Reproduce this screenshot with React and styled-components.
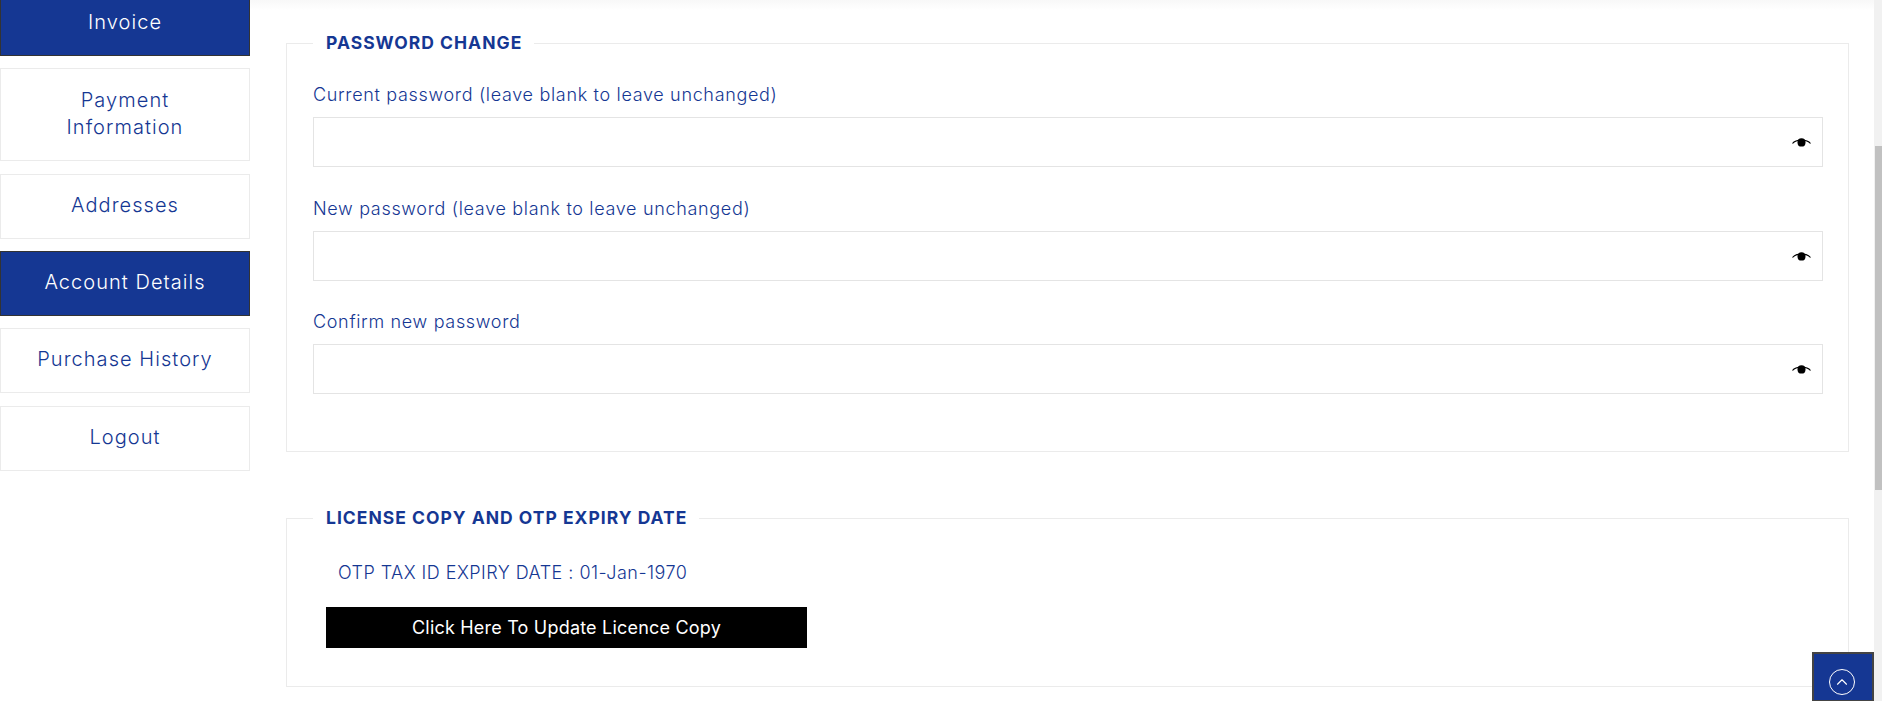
import React from 'react';
import styled, { createGlobalStyle } from 'styled-components';
import { ChevronUp } from 'lucide-react';

const NAVY = '#153793';
const LINE = '#ebebeb';
const FONT = '"Inter", "Open Sans", sans-serif';

const GlobalStyle = createGlobalStyle`
  html, body {
    margin: 0;
    height: 701px;
    overflow: hidden;
    background: #fff;
    font-family: ${FONT};
    color: ${NAVY};
  }
  * { box-sizing: border-box; }
`;

const Page = styled.div`
  display: flex;
  height: 701px;
  overflow: hidden;
`;

const Main = styled.div`
  flex: 1;
  display: flex;
  gap: 36px;
  min-width: 0;
`;

const Sidebar = styled.nav`
  width: 250px;
  flex: none;
  display: flex;
  flex-direction: column;
  gap: 12.35px;
  margin-top: -9px;
`;

const NavItem = styled.a`
  display: flex;
  align-items: center;
  justify-content: center;
  flex: none;
  height: ${(props) => props.$height || 65}px;
  padding: 0 30px 2px;
  text-align: center;
  font-size: 20px;
  font-weight: 300;
  letter-spacing: 1.05px;
  line-height: 27px;
  background: ${(props) => (props.$active ? NAVY : '#fff')};
  color: ${(props) => (props.$active ? '#fff' : NAVY)};
  border: 1px solid ${(props) => (props.$active ? '#333' : LINE)};
`;

const Content = styled.div`
  flex: 1;
  min-width: 0;
  padding: 33px 25px 0 0;
  position: relative;
`;

const TopShade = styled.div`
  position: absolute;
  top: 0;
  left: -36px;
  right: 0;
  height: 10px;
  background: linear-gradient(#f8f8f8, #fff);
`;

const Box = styled.fieldset`
  margin: 0 0 ${(props) => props.$gap || 0}px;
  padding: 0 25px 0 26px;
  height: ${(props) => props.$height}px;
  border: 1px solid ${LINE};
`;

const BoxTitle = styled.legend`
  padding: 0 12px 0 13px;
  font-size: 17.5px;
  font-weight: 700;
  letter-spacing: 1px;
  line-height: 20px;
  color: ${NAVY};
  text-transform: uppercase;
`;

const FieldList = styled.div`
  display: flex;
  flex-direction: column;
  gap: 29.6px;
  padding-top: 30px;
`;

const Label = styled.label`
  display: block;
  margin-bottom: 10px;
  font-size: 18px;
  font-weight: 300;
  letter-spacing: 0.67px;
  line-height: 24px;
`;

const InputWrap = styled.div`
  position: relative;
`;

const Input = styled.input`
  display: block;
  width: 100%;
  height: 50px;
  border: 1px solid #e4e4e4;
  background: #fff;
  outline: none;
`;

const EyeIcon = styled.svg`
  position: absolute;
  right: 12px;
  top: 21px;
  width: 19px;
  height: 10px;
`;

const ExpiryText = styled.p`
  margin: 33px 0 22px 25px;
  font-size: 18px;
  font-weight: 300;
  letter-spacing: 0.47px;
  line-height: 24px;
`;

const UpdateButton = styled.button`
  display: block;
  width: 481px;
  height: 41px;
  margin-left: 13px;
  border: 0;
  background: #000;
  color: #fff;
  font-family: inherit;
  font-size: 18px;
  font-weight: 400;
  letter-spacing: 0.2px;
`;

const ScrollRail = styled.div`
  width: 8px;
  flex: none;
  background: #f1f1f1;
  padding-top: 146px;
`;

const ScrollThumb = styled.div`
  height: 344px;
  margin-left: 1px;
  background: #c1c1c1;
`;

const TopButton = styled.a`
  position: fixed;
  right: 8px;
  bottom: -1px;
  width: 62px;
  height: 50px;
  display: flex;
  align-items: center;
  justify-content: center;
  background: ${NAVY};
  border: 2px solid #444;
`;

const TopCircle = styled.span`
  width: 26px;
  height: 26px;
  margin: 9px 3px 0 0;
  border: 1.5px solid #fff;
  border-radius: 50%;
  display: flex;
  align-items: center;
  justify-content: center;
  color: #fff;
`;

function Eye() {
  return (
    <EyeIcon viewBox="0 0 19 10">
      <path d="M0.5 5.5 C4 1 15 1 18.5 5.5" fill="none" stroke="#000" strokeWidth="1.2" />
      <ellipse cx="9.5" cy="4.4" rx="4" ry="4.2" fill="#000" />
    </EyeIcon>
  );
}

const fields = [
  'Current password (leave blank to leave unchanged)',
  'New password (leave blank to leave unchanged)',
  'Confirm new password',
];

export default function App() {
  return (
    <Page>
      <GlobalStyle />
      <Main>
        <Sidebar>
          <NavItem $active>Invoice</NavItem>
          <NavItem $height={93}>Payment Information</NavItem>
          <NavItem>Addresses</NavItem>
          <NavItem $active>Account Details</NavItem>
          <NavItem>Purchase History</NavItem>
          <NavItem>Logout</NavItem>
        </Sidebar>
        <Content>
          <TopShade />
          <Box $height={419} $gap={56}>
            <BoxTitle>Password Change</BoxTitle>
            <FieldList>
              {fields.map((label) => (
                <div key={label}>
                  <Label>{label}</Label>
                  <InputWrap>
                    <Input type="password" />
                    <Eye />
                  </InputWrap>
                </div>
              ))}
            </FieldList>
          </Box>
          <Box $height={179}>
            <BoxTitle>License Copy and OTP Expiry Date</BoxTitle>
            <ExpiryText>OTP TAX ID EXPIRY DATE : 01-Jan-1970</ExpiryText>
            <UpdateButton>Click Here To Update Licence Copy</UpdateButton>
          </Box>
        </Content>
      </Main>
      <ScrollRail>
        <ScrollThumb />
      </ScrollRail>
      <TopButton>
        <TopCircle>
          <ChevronUp size={18} strokeWidth={1.5} />
        </TopCircle>
      </TopButton>
    </Page>
  );
}
